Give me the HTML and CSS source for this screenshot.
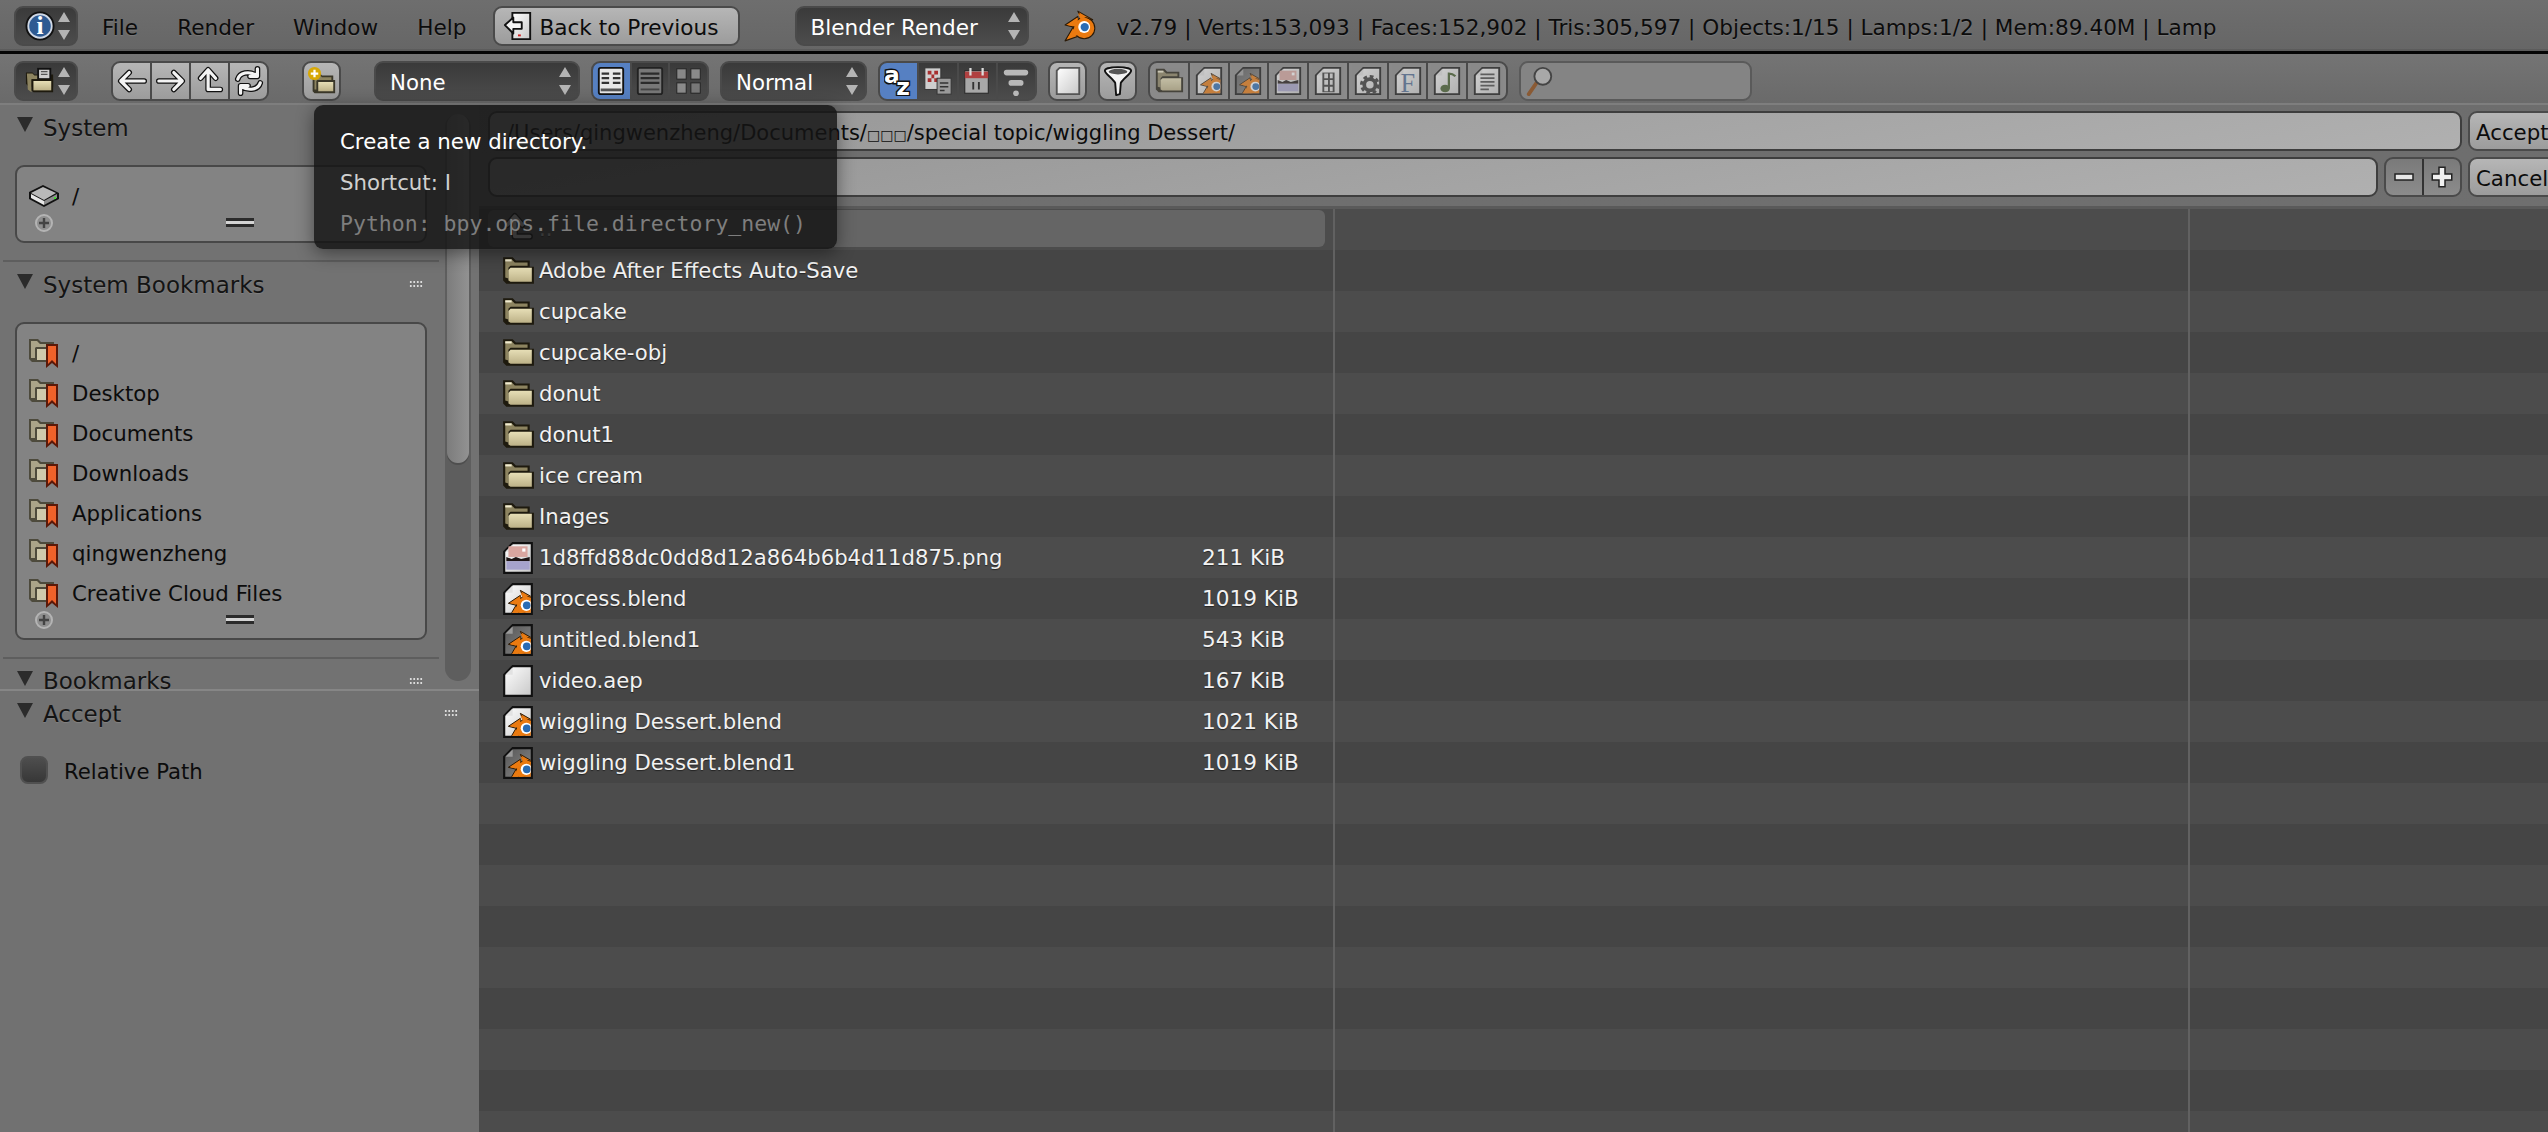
FILE: index.html
```html
<!DOCTYPE html>
<html lang="en">

<head>
  <meta charset="UTF-8" />
  <title>Blender File Browser</title>
  <link rel="stylesheet" href="styles.css">
</head>

<body>
  <!-- icon sprite -->
  <svg class="sprite" xmlns="http://www.w3.org/2000/svg">
    <defs>
      <linearGradient id="gFolder" x1="0" y1="0" x2="0" y2="1">
        <stop offset="0" stop-color="#e6deb6" />
        <stop offset="1" stop-color="#bdb288" />
      </linearGradient>
      <linearGradient id="gDoc" x1="0" y1="0" x2="1" y2="1">
        <stop offset="0" stop-color="#ffffff" />
        <stop offset="1" stop-color="#c8c8c8" />
      </linearGradient>
      <linearGradient id="gDocDark" x1="0" y1="0" x2="1" y2="1">
        <stop offset="0" stop-color="#555555" />
        <stop offset="1" stop-color="#8a8a8a" />
      </linearGradient>
      <clipPath id="cDoc">
        <rect x="4" y="3" width="24" height="26" />
      </clipPath>
      <symbol id="i-logo" viewBox="0 0 32 32">
        <g stroke="#2a1a08" stroke-width="1" stroke-linejoin="round">
          <path d="M13 2l14 8-9 3z" fill="#ea7a10" />
          <path d="M1 15l12-8v11z" fill="#ea7a10" />
          <path d="M1 30l10-17 7 11z" fill="#ea7a10" />
          <circle cx="19" cy="18" r="10" fill="#ea7a10" />
        </g>
        <path d="M13 4l12 7-8 2zM3 15l10-7v9zM3 28l9-14 5 9z" fill="#ea7a10" />
        <circle cx="19" cy="17" r="5.6" fill="#ffffff" />
        <circle cx="19.5" cy="17" r="3.9" fill="#2a6cb4" />
      </symbol>
      <symbol id="i-folder" viewBox="0 0 32 32">
        <path d="M2 3h9l3 3h13v6h4v16H5l-3-3z" fill="#1e1a0e" />
        <path d="M4 5h6l3 3h12v3H9l-2 2v10l-3-1z" fill="#8d8460" />
        <path d="M4 5h6v2H4z" fill="#f2ecd0" />
        <path d="M9 13h20v13H9l-2-1v-10z" fill="url(#gFolder)" />
      </symbol>
      <symbol id="i-folder-doc" viewBox="0 0 32 32">
        <path d="M1 7h7l2 2h20v13H4l-3-3z" fill="#1e1a0e" />
        <rect x="13" y="2" width="15" height="13" fill="#111111" />
        <rect x="15" y="4" width="11" height="9" fill="#cfcfcf" />
        <path d="M17 6h7M17 9h7" stroke="#555555" stroke-width="1.4" />
        <path d="M2 8h6l2 2h3v4H7v14l-4-3z" fill="#8d8460" />
        <path d="M7 14h23v14H9l-2-2z" fill="#1e1a0e" />
        <path d="M9 16h19v10H9z" fill="url(#gFolder)" />
      </symbol>
      <symbol id="i-folder-new" viewBox="0 0 32 32">
        <path d="M6 8h8l2 2h12v5h2v14H8l-2-2z" fill="#3a3729" />
        <path d="M8 10h6l2 2h10v3H11l-1 1v9H8z" fill="#8d8460" />
        <path d="M12 17h16v10H12z" fill="url(#gFolder)" />
        <circle cx="8" cy="8" r="7" fill="#d7a806" />
        <path d="M8 4v8M4 8h8" stroke="#ffffff" stroke-width="2.4" />
      </symbol>
      <symbol id="i-bookmark" viewBox="0 0 32 32">
        <path d="M1 2h9l3 3h13v5h2v15H4l-3-3z" fill="#4d4a3c" />
        <path d="M3 4h6l3 3h12v3H8l-1 1v10H3z" fill="#aaa489" />
        <path d="M9 12h17v11H9z" fill="#cfc9ac" />
        <path d="M18 7h12v24l-6-5-6 5z" fill="#5a1808" />
        <path d="M20 9h8v18l-4-4-4 4z" fill="#f0622a" />
      </symbol>
      <symbol id="i-disk" viewBox="0 0 32 24">
        <path d="M15 1l16 8v6l-15 8-15-8V8z" fill="#111111" />
        <path d="M15 3l13 6-12 7-13-7z" fill="#b9b9b9" />
        <path d="M3 10l13 7v4L3 14z" fill="#e8e8e8" />
        <path d="M16 17l13-7v4l-13 7z" fill="#8c8c8c" />
        <rect x="26" y="13" width="2" height="2" fill="#3fe02c" />
      </symbol>
      <symbol id="i-doc" viewBox="0 0 32 32">
        <path d="M11 2h18v28H3V10z" fill="url(#gDoc)" stroke="#111111" stroke-width="2" />
        <path d="M11 3v7H4z" fill="#e2e2e2" />
      </symbol>
      <symbol id="i-blend" viewBox="0 0 32 32">
        <use href="#i-doc" width="32" height="32" />
        <g clip-path="url(#cDoc)">
          <use href="#i-logo" x="6" y="6" width="30" height="30" />
        </g>
      </symbol>
      <symbol id="i-blend1" viewBox="0 0 32 32">
        <path d="M11 2h18v28H3V10z" fill="url(#gDocDark)" stroke="#111111" stroke-width="2" />
        <path d="M11 3v7H4z" fill="#9a9a9a" />
        <g clip-path="url(#cDoc)">
          <use href="#i-logo" x="6" y="6" width="30" height="30" />
        </g>
      </symbol>
      <symbol id="i-image" viewBox="0 0 32 32">
        <use href="#i-doc" width="32" height="32" />
        <rect x="7" y="5" width="18" height="10" fill="#d9a6a0" />
        <rect x="20" y="7" width="3" height="3" fill="#ffffff" />
        <path d="M5 15l5 2 4-2 5 2 8-2v4H5z" fill="#1c1414" />
        <rect x="5" y="19" width="22" height="8" fill="#a6a3cc" />
      </symbol>
      <symbol id="i-film" viewBox="0 0 32 32">
        <use href="#i-doc" width="32" height="32" />
        <rect x="10" y="7" width="13" height="21" fill="#333333" />
        <path d="M12 8h4v5h-4zM18 8h3v5h-3zM12 15h4v5h-4zM18 15h3v5h-3zM12 22h4v5h-4zM18 22h3v5h-3z" fill="#dddddd" />
      </symbol>
      <symbol id="i-gear" viewBox="0 0 32 32">
        <use href="#i-doc" width="32" height="32" />
        <circle cx="18" cy="20" r="6" fill="none" stroke="#333333" stroke-width="4" />
        <circle cx="18" cy="20" r="9" fill="none" stroke="#333333" stroke-width="3" stroke-dasharray="4 3" />
      </symbol>
      <symbol id="i-font" viewBox="0 0 32 32">
        <use href="#i-doc" width="32" height="32" />
        <text x="8" y="28" class="glyph-font">F</text>
      </symbol>
      <symbol id="i-music" viewBox="0 0 32 32">
        <use href="#i-doc" width="32" height="32" />
        <ellipse cx="14" cy="24" rx="5" ry="4" fill="#3f5a28" />
        <path d="M18 24V8c3 0 5 1 7 3" fill="none" stroke="#3f5a28" stroke-width="2.4" />
      </symbol>
      <symbol id="i-text" viewBox="0 0 32 32">
        <use href="#i-doc" width="32" height="32" />
        <path d="M9 9h15M9 13h15M9 17h15M9 21h15M9 25h9" stroke="#444444" stroke-width="1.8" />
      </symbol>
      <symbol id="i-updown" viewBox="0 0 14 32">
        <path d="M7 2l6 10H1zM7 30l6-10H1z" fill="#b4b4b4" />
      </symbol>
      <symbol id="i-back" viewBox="0 0 32 32">
        <path d="M10 2h19v28H10z" fill="url(#gDoc)" stroke="#111111" stroke-width="2" />
        <path d="M2 15l9-8v5h9v7h-9v5z" fill="#f4f4f4" stroke="#111111" stroke-width="2" stroke-linejoin="round" />
        <rect x="16" y="25" width="3" height="2" fill="#d02020" />
      </symbol>
      <symbol id="i-left" viewBox="0 0 32 32">
        <path d="M13 7l-9 9 9 9M5 16h24" fill="none" stroke="#111111" stroke-width="6" stroke-linecap="round" stroke-linejoin="round" />
        <path d="M13 7l-9 9 9 9M5 16h24" fill="none" stroke="#f4f4f4" stroke-width="3.4" stroke-linecap="round" stroke-linejoin="round" />
      </symbol>
      <symbol id="i-right" viewBox="0 0 32 32">
        <path d="M19 7l9 9-9 9M27 16H3" fill="none" stroke="#111111" stroke-width="6" stroke-linecap="round" stroke-linejoin="round" />
        <path d="M19 7l9 9-9 9M27 16H3" fill="none" stroke="#f4f4f4" stroke-width="3.4" stroke-linecap="round" stroke-linejoin="round" />
      </symbol>
      <symbol id="i-up" viewBox="0 0 32 32">
        <path d="M6 13l8-9 8 9M14 5v20h13" fill="none" stroke="#111111" stroke-width="6" stroke-linecap="round" stroke-linejoin="round" />
        <path d="M6 13l8-9 8 9M14 5v20h13" fill="none" stroke="#f4f4f4" stroke-width="3.4" stroke-linecap="round" stroke-linejoin="round" />
      </symbol>
      <symbol id="i-refresh" viewBox="0 0 32 32">
        <path d="M4 14c2-7 12-9 20-4M25 3v8h-8M28 18c-2 7-12 9-20 4M7 29v-8h8" fill="none" stroke="#111111" stroke-width="6" stroke-linecap="round" stroke-linejoin="round" />
        <path d="M4 14c2-7 12-9 20-4M25 3v8h-8M28 18c-2 7-12 9-20 4M7 29v-8h8" fill="none" stroke="#f4f4f4" stroke-width="3.4" stroke-linecap="round" stroke-linejoin="round" />
      </symbol>
      <symbol id="i-parent" viewBox="0 0 32 32">
        <path d="M6 12l7-8 7 8M13 5v18h14" fill="none" stroke="#111111" stroke-width="6" stroke-linecap="round" stroke-linejoin="round" />
        <path d="M6 12l7-8 7 8M13 5v18h14" fill="none" stroke="#e8e8e8" stroke-width="3.4" stroke-linecap="round" stroke-linejoin="round" />
      </symbol>
      <symbol id="i-info" viewBox="0 0 32 32">
        <circle cx="16" cy="16" r="14.5" fill="#cfd8e6" stroke="#111111" stroke-width="2" />
        <circle cx="16" cy="16" r="11.5" fill="#2e5a92" />
        <text x="16" y="25" class="glyph-info">i</text>
      </symbol>
      <symbol id="i-short" viewBox="0 0 32 32">
        <rect x="3" y="2" width="26" height="28" rx="2" fill="#e8e8e8" stroke="#111111" stroke-width="2" />
        <path d="M6 8h8M18 8h8M6 13h8M18 13h8M6 18h8M18 18h8" stroke="#333333" stroke-width="2.4" />
        <rect x="5" y="24" width="22" height="3" fill="#555555" />
      </symbol>
      <symbol id="i-long" viewBox="0 0 32 32">
        <rect x="3" y="2" width="26" height="28" rx="2" fill="#777777" stroke="#222222" stroke-width="2" />
        <path d="M6 8h20M6 13h20M6 18h20" stroke="#2a2a2a" stroke-width="2.4" />
        <rect x="6" y="24" width="20" height="2" fill="#444444" />
      </symbol>
      <symbol id="i-thumbs" viewBox="0 0 32 32">
        <rect x="3" y="3" width="10" height="11" fill="#888888" stroke="#222222" />
        <rect x="18" y="3" width="10" height="11" fill="#8a8a8a" stroke="#222222" />
        <rect x="3" y="18" width="10" height="11" fill="#8a8a8a" stroke="#222222" />
        <rect x="18" y="18" width="10" height="11" fill="#777777" stroke="#222222" />
      </symbol>
      <symbol id="i-az" viewBox="0 0 32 32">
        <text x="0" y="18" class="glyph-az">a</text>
        <text x="13" y="31" class="glyph-az">z</text>
      </symbol>
      <symbol id="i-ext" viewBox="0 0 32 32">
        <rect x="2" y="2" width="17" height="23" fill="#cfcfcf" stroke="#333333" />
        <path d="M5 5h4v4H5zM12 5h4v4h-4zM9 9h3v4H9zM5 13h4v4H5zM12 13h4v4h-4z" fill="#a83030" />
        <rect x="15" y="13" width="15" height="17" fill="#9a9a9a" stroke="#333333" />
        <path d="M18 18h9M18 22h9M18 26h5" stroke="#333333" stroke-width="1.6" />
      </symbol>
      <symbol id="i-cal" viewBox="0 0 32 32">
        <rect x="3" y="5" width="25" height="24" fill="#a8a8a8" stroke="#222222" />
        <rect x="3" y="6" width="25" height="7" fill="#b04040" />
        <path d="M9 2v8M22 2v8" stroke="#dddddd" stroke-width="2.4" />
        <path d="M12 17v8M18 17v8" stroke="#333333" stroke-width="2" />
      </symbol>
      <symbol id="i-size" viewBox="0 0 32 32">
        <rect x="3" y="4" width="26" height="6" rx="3" fill="#b8b8b8" />
        <rect x="8" y="15" width="16" height="6" rx="3" fill="#b8b8b8" />
        <rect x="13" y="26" width="6" height="6" rx="3" fill="#b8b8b8" />
      </symbol>
      <symbol id="i-hidden" viewBox="0 0 32 32">
        <path d="M7 2h21v28H4V5z" fill="url(#gDoc)" stroke="#555555" stroke-width="2" />
      </symbol>
      <symbol id="i-funnel" viewBox="0 0 32 32">
        <path d="M2 5c0-5 28-5 28 0 0 3-9 9-11 13l-1 12-4 1-1-13C11 14 2 8 2 5z" fill="#f2f2f2" stroke="#111111" stroke-width="2" stroke-linejoin="round" />
        <ellipse cx="16" cy="6" rx="10" ry="3" fill="#555555" />
      </symbol>
      <symbol id="i-search" viewBox="0 0 32 32">
        <path d="M4 30l9-13" stroke="#8a5a34" stroke-width="4" stroke-linecap="round" />
        <circle cx="19" cy="11" r="9" fill="#a8a8a8" stroke="#444444" stroke-width="2" />
      </symbol>
      <symbol id="i-add" viewBox="0 0 20 20">
        <circle cx="10" cy="10" r="8" fill="#8e8e8e" stroke="#b4b4b4" stroke-width="2" />
        <path d="M10 5v10M5 10h10" stroke="#444444" stroke-width="2.4" />
      </symbol>
      <symbol id="i-minus" viewBox="0 0 32 32">
        <rect x="4" y="12" width="24" height="8" fill="#e8e8e8" stroke="#222222" stroke-width="2" />
      </symbol>
      <symbol id="i-plus" viewBox="0 0 32 32">
        <path d="M12 3h8v9h9v8h-9v9h-8v-9H3v-8h9z" fill="#f0f0f0" stroke="#222222" stroke-width="2" />
      </symbol>
    </defs>
  </svg>

  <header class="topbar">
    <div class="w dark w-editor">
      <svg class="ic"><use href="#i-info" /></svg>
      <svg class="updown"><use href="#i-updown" /></svg>
    </div>
    <nav class="menus">
      <span>File</span>
      <span>Render</span>
      <span>Window</span>
      <span>Help</span>
    </nav>
    <div class="w light w-prev">
      <svg class="ic"><use href="#i-back" /></svg>
      <span class="label">Back to Previous</span>
    </div>
    <div class="w dark w-engine">
      <span class="label grow">Blender Render</span>
      <svg class="updown"><use href="#i-updown" /></svg>
    </div>
    <svg class="logo"><use href="#i-logo" /></svg>
    <span class="stats">v2.79 | Verts:153,093 | Faces:152,902 | Tris:305,597 | Objects:1/15 | Lamps:1/2 | Mem:89.40M | Lamp</span>
  </header>

  <div class="toolbar">
    <div class="w dark w-editor">
      <svg class="ic"><use href="#i-folder-doc" /></svg>
      <svg class="updown"><use href="#i-updown" /></svg>
    </div>
    <div class="w light seg w-nav gap-l">
      <span class="cell"><svg class="ic"><use href="#i-left" /></svg></span>
      <span class="cell"><svg class="ic"><use href="#i-right" /></svg></span>
      <span class="cell"><svg class="ic"><use href="#i-up" /></svg></span>
      <span class="cell"><svg class="ic"><use href="#i-refresh" /></svg></span>
    </div>
    <div class="w light seg w-one gap-l">
      <span class="cell"><svg class="ic"><use href="#i-folder-new" /></svg></span>
    </div>
    <div class="w dark w-none gap-l">
      <span class="label grow">None</span>
      <svg class="updown"><use href="#i-updown" /></svg>
    </div>
    <div class="w dark seg w-view gap-s">
      <span class="cell on"><svg class="ic"><use href="#i-short" /></svg></span>
      <span class="cell"><svg class="ic"><use href="#i-long" /></svg></span>
      <span class="cell"><svg class="ic"><use href="#i-thumbs" /></svg></span>
    </div>
    <div class="w dark w-normal gap-s">
      <span class="label grow">Normal</span>
      <svg class="updown"><use href="#i-updown" /></svg>
    </div>
    <div class="w dark seg w-sort gap-s">
      <span class="cell on"><svg class="ic"><use href="#i-az" /></svg></span>
      <span class="cell"><svg class="ic"><use href="#i-ext" /></svg></span>
      <span class="cell"><svg class="ic"><use href="#i-cal" /></svg></span>
      <span class="cell"><svg class="ic"><use href="#i-size" /></svg></span>
    </div>
    <div class="w light seg w-one gap-s">
      <span class="cell"><svg class="ic"><use href="#i-hidden" /></svg></span>
    </div>
    <div class="w light seg w-one gap-s">
      <span class="cell"><svg class="ic"><use href="#i-funnel" /></svg></span>
    </div>
    <div class="w seg dim w-types gap-s">
      <span class="cell"><svg class="ic"><use href="#i-folder" /></svg></span>
      <span class="cell"><svg class="ic"><use href="#i-blend" /></svg></span>
      <span class="cell"><svg class="ic"><use href="#i-blend1" /></svg></span>
      <span class="cell"><svg class="ic"><use href="#i-image" /></svg></span>
      <span class="cell"><svg class="ic"><use href="#i-film" /></svg></span>
      <span class="cell"><svg class="ic"><use href="#i-gear" /></svg></span>
      <span class="cell"><svg class="ic"><use href="#i-font" /></svg></span>
      <span class="cell"><svg class="ic"><use href="#i-music" /></svg></span>
      <span class="cell"><svg class="ic"><use href="#i-text" /></svg></span>
    </div>
    <div class="w search gap-s">
      <svg class="ic"><use href="#i-search" /></svg>
    </div>
  </div>

  <div class="browser">
    <aside class="side">
      <div class="side-top">
        <div class="panels">
          <section class="panel">
            <div class="panel-head">
              <span class="tri"></span>
              <span class="label">System</span>
            </div>
            <div class="box">
              <div class="box-row"><svg class="ic-disk"><use href="#i-disk" /></svg><span>/</span></div>
              <div class="box-foot">
                <svg class="ic-add"><use href="#i-add" /></svg>
                <span class="resize"></span>
              </div>
            </div>
          </section>
          <section class="panel">
            <div class="panel-head">
              <span class="tri"></span>
              <span class="label">System Bookmarks</span>
              <span class="grip"></span>
            </div>
            <div class="box">
              <div class="box-row"><svg class="ic-mark"><use href="#i-bookmark" /></svg><span>/</span></div>
              <div class="box-row"><svg class="ic-mark"><use href="#i-bookmark" /></svg><span>Desktop</span></div>
              <div class="box-row"><svg class="ic-mark"><use href="#i-bookmark" /></svg><span>Documents</span></div>
              <div class="box-row"><svg class="ic-mark"><use href="#i-bookmark" /></svg><span>Downloads</span></div>
              <div class="box-row"><svg class="ic-mark"><use href="#i-bookmark" /></svg><span>Applications</span></div>
              <div class="box-row"><svg class="ic-mark"><use href="#i-bookmark" /></svg><span>qingwenzheng</span></div>
              <div class="box-row"><svg class="ic-mark"><use href="#i-bookmark" /></svg><span>Creative Cloud Files</span></div>
              <div class="box-foot">
                <svg class="ic-add"><use href="#i-add" /></svg>
                <span class="resize"></span>
              </div>
            </div>
          </section>
          <section class="panel">
            <div class="panel-head">
              <span class="tri"></span>
              <span>Bookmarks</span>
              <span class="grip"></span>
            </div>
          </section>
        </div>
        <div class="scroll-track">
          <div class="scroll-thumb"></div>
        </div>
      </div>
      <section class="accept">
        <div class="panel-head">
          <span class="tri"></span>
          <span class="label">Accept</span>
          <span class="grip"></span>
        </div>
        <label class="check-row">
          <span class="check"></span>
          <span class="label">Relative Path</span>
        </label>
      </section>
    </aside>

    <main class="files">
      <div class="path-rows">
        <div class="path-row">
          <div class="w field grow"><span class="label">/Users/qingwenzheng/Documents/<span class="tofu">□□□</span>/special topic/wiggling Dessert/</span></div>
          <div class="w light w-act"><span class="label">Accept</span></div>
        </div>
        <div class="path-row">
          <div class="w field grow"></div>
          <div class="w light seg w-inc">
            <span class="cell"><svg class="ic-sm"><use href="#i-minus" /></svg></span>
            <span class="cell"><svg class="ic-sm"><use href="#i-plus" /></svg></span>
          </div>
          <div class="w light w-act"><span class="label">Cancel</span></div>
        </div>
      </div>
      <div class="columns">
        <div class="col col-files">
          <div class="row parent">
            <svg class="ic-file"><use href="#i-parent" /></svg>
            <span class="name">..</span>
          </div>
          <div class="row">
            <svg class="ic-file"><use href="#i-folder" /></svg>
            <span class="name">Adobe After Effects Auto-Save</span>
          </div>
          <div class="row">
            <svg class="ic-file"><use href="#i-folder" /></svg>
            <span class="name">cupcake</span>
          </div>
          <div class="row">
            <svg class="ic-file"><use href="#i-folder" /></svg>
            <span class="name">cupcake-obj</span>
          </div>
          <div class="row">
            <svg class="ic-file"><use href="#i-folder" /></svg>
            <span class="name">donut</span>
          </div>
          <div class="row">
            <svg class="ic-file"><use href="#i-folder" /></svg>
            <span class="name">donut1</span>
          </div>
          <div class="row">
            <svg class="ic-file"><use href="#i-folder" /></svg>
            <span class="name">ice cream</span>
          </div>
          <div class="row">
            <svg class="ic-file"><use href="#i-folder" /></svg>
            <span class="name">Inages</span>
          </div>
          <div class="row">
            <svg class="ic-file"><use href="#i-image" /></svg>
            <span class="name">1d8ffd88dc0dd8d12a864b6b4d11d875.png</span>
            <span class="size">211 KiB</span>
          </div>
          <div class="row">
            <svg class="ic-file"><use href="#i-blend" /></svg>
            <span class="name">process.blend</span>
            <span class="size">1019 KiB</span>
          </div>
          <div class="row">
            <svg class="ic-file"><use href="#i-blend1" /></svg>
            <span class="name">untitled.blend1</span>
            <span class="size">543 KiB</span>
          </div>
          <div class="row">
            <svg class="ic-file"><use href="#i-doc" /></svg>
            <span class="name">video.aep</span>
            <span class="size">167 KiB</span>
          </div>
          <div class="row">
            <svg class="ic-file"><use href="#i-blend" /></svg>
            <span class="name">wiggling Dessert.blend</span>
            <span class="size">1021 KiB</span>
          </div>
          <div class="row">
            <svg class="ic-file"><use href="#i-blend1" /></svg>
            <span class="name">wiggling Dessert.blend1</span>
            <span class="size">1019 KiB</span>
          </div>
        </div>
        <div class="col col-mid"></div>
        <div class="col"></div>
      </div>
    </main>
  </div>

  <!-- tooltip over the new directory button -->
  <div class="tooltip">
    <div class="tip-line">Create a new directory.</div>
    <div class="tip-line tip-key">Shortcut: I</div>
    <div class="tip-line tip-py">Python: bpy.ops.file.directory_new()</div>
  </div>
</body>

</html>
```

FILE: styles.css
```css
html,
body {
  margin: 0;
  height: 1132px;
  overflow: hidden;
}

body {
  position: relative;
  background: #727272;
  color: #0c0c0c;
  font-family: "DejaVu Sans", sans-serif;
  font-size: 21.3px;
}

.sprite {
  display: block;
  width: 0;
  height: 0;
}

.glyph-font {
  font-family: "Liberation Serif", serif;
  font-size: 28px;
  fill: #4d6a94;
}

.glyph-info {
  font-family: "Liberation Serif", serif;
  font-size: 27px;
  font-weight: bold;
  fill: #ffffff;
  text-anchor: middle;
}

.glyph-az {
  font-family: "DejaVu Sans", sans-serif;
  font-size: 25px;
  font-weight: bold;
  fill: #ffffff;
  stroke: #111111;
  stroke-width: 3px;
  paint-order: stroke;
}

/* bars */
.topbar {
  display: flex;
  align-items: center;
  box-sizing: border-box;
  height: 54px;
  padding: 1px 0 0 14px;
  background: linear-gradient(#6e6e6e, #666666);
  border-bottom: 3px solid #050505;
  box-shadow: inset 0 -2px 0 #5c5c5c;
  font-size: 21.6px;
}

.toolbar {
  display: flex;
  align-items: center;
  box-sizing: border-box;
  height: 51px;
  padding: 5px 0 0 14px;
  background: linear-gradient(#747474, #6a6a6a);
  border-bottom: 2px solid #7e7e7e;
}

.menus {
  display: flex;
  gap: 39px;
  margin: 0 27px 0 24px;
  padding-top: 3px;
  text-shadow: 0 1px 1px rgba(255, 255, 255, 0.12);
}

.stats {
  margin-left: 18px;
  padding-top: 3px;
  text-shadow: 0 1px 1px rgba(255, 255, 255, 0.12);
  white-space: nowrap;
}

.logo {
  width: 34px;
  height: 34px;
  margin-left: 35px;
}

/* widgets */
.w {
  display: flex;
  flex: none;
  align-items: center;
  box-sizing: border-box;
  height: 40px;
  border: 2px solid #4a4a4a;
  border-radius: 9px;
  white-space: nowrap;
}

.label {
  padding-top: 3px;
}

.tofu {
  font-size: 14px;
}

.light {
  background: linear-gradient(#b6b6b6, #9c9c9c);
  color: #0c0c0c;
}

.dark {
  background: linear-gradient(#3a3a3a, #4c4c4c);
  color: #ffffff;
}

.dim {
  background: #8a8a8a;
}

.field {
  background: linear-gradient(170deg, #969696, #b0b0b0);
  border-color: #3e3e3e;
  padding-left: 17px;
  font-size: 21px;
}

.grow {
  flex: 1;
}

.search {
  width: 233px;
  padding-left: 4px;
  background: #848484;
  border-color: #5a5a5a;
}

.gap-s {
  margin-left: 11px;
}

.gap-l {
  margin-left: 33px;
}

.w-editor {
  width: 64px;
  padding-left: 9px;
}

.w-prev {
  width: 247px;
  padding-left: 8px;
  gap: 6px;
}

.w-engine {
  width: 234px;
  margin-left: 55px;
  padding: 0 6px 0 13px;
}

.w-nav {
  width: 158px;
}

.w-one {
  width: 39px;
}

.w-none {
  width: 206px;
  padding: 0 6px 0 14px;
}

.w-view {
  width: 118px;
}

.w-normal {
  width: 147px;
  padding: 0 6px 0 14px;
}

.w-sort {
  width: 159px;
}

.w-types {
  width: 360px;
}

.seg {
  overflow: hidden;
}

.cell {
  display: flex;
  flex: 1;
  align-items: center;
  justify-content: center;
  height: 100%;
  border-left: 2px solid #4a4a4a;
}

.cell:first-child {
  border-left: 0;
}

.on {
  background: #5680c2;
}

.ic {
  flex: none;
  width: 30px;
  height: 30px;
}

.dim .ic {
  opacity: 0.62;
}

.updown {
  flex: none;
  width: 14px;
  height: 32px;
  margin-left: 2px;
}

/* left side */
.browser {
  display: flex;
  height: 1027px;
}

.side {
  display: flex;
  flex: none;
  flex-direction: column;
  width: 479px;
  background: #727272;
}

.side-top {
  display: flex;
  flex: none;
  height: 584px;
  overflow: hidden;
}

.panels {
  flex: none;
  width: 436px;
  margin: 0 6px 0 3px;
}

.panel {
  padding: 0 12px 17px;
  border-bottom: 2px solid #5e5e5e;
}

.panel-head {
  display: flex;
  align-items: center;
  height: 44px;
  font-size: 23px;
  color: #141414;
  text-shadow: 0 1px 1px rgba(255, 255, 255, 0.12);
}

.panel-head .label {
  padding-top: 1px;
}

.tri {
  flex: none;
  width: 0;
  height: 0;
  margin: 0 10px 6px 2px;
  border-top: 15px solid #2b2b2b;
  border-left: 8px solid transparent;
  border-right: 8px solid transparent;
}

.grip {
  flex: none;
  width: 14px;
  height: 8px;
  margin-left: auto;
  margin-right: 4px;
  background-image: radial-gradient(circle, #dcdcdc 1px, transparent 1.2px);
  background-size: 3.5px 4px;
}

.box {
  box-sizing: border-box;
  margin-top: 16px;
  padding-top: 9px;
  background: #838383;
  border: 2px solid #484848;
  border-radius: 9px;
}

.box-row {
  display: flex;
  align-items: center;
  height: 40px;
  padding-left: 11px;
  gap: 12px;
}

.ic-disk {
  flex: none;
  width: 32px;
  height: 24px;
}

.ic-mark {
  flex: none;
  width: 32px;
  height: 32px;
}

.box-foot {
  display: flex;
  align-items: flex-start;
  height: 25px;
  padding-left: 17px;
}

.ic-add {
  flex: none;
  width: 20px;
  height: 20px;
  margin-top: -3px;
}

.resize {
  flex: none;
  width: 28px;
  height: 3px;
  margin: 2px 0 0 172px;
  border-top: 3px solid #2b2b2b;
  border-bottom: 3px solid #2b2b2b;
  background: #d4d4d4;
}

.scroll-track {
  flex: none;
  width: 26px;
  height: 567px;
  margin-top: 9px;
  background: #5e5e5e;
  border-radius: 13px;
}

.scroll-thumb {
  height: 349px;
  margin: 0 2px;
  background: linear-gradient(90deg, #7c7c7c, #929292);
  border-radius: 11px;
  box-shadow: 0 2px 0 #4e4e4e;
}

.accept {
  flex: 1;
  padding: 0 0 0 15px;
  border-top: 2px solid #868686;
  background: #717171;
}

.accept .grip {
  margin-right: 21px;
}

.check-row {
  display: flex;
  align-items: center;
  gap: 16px;
  margin: 21px 0 0 5px;
  font-size: 21.2px;
}

.check {
  flex: none;
  width: 28px;
  height: 28px;
  box-sizing: border-box;
  background: linear-gradient(#4e4e4e, #373737);
  border: 2px solid #505050;
  border-radius: 8px;
}

/* file area */
.files {
  flex: 1;
  min-width: 0;
  overflow: hidden;
}

.path-rows {
  box-sizing: border-box;
  height: 104px;
  padding: 6px 0 0 9px;
  background: linear-gradient(#6d6d6d, #6f6f6f);
  border-bottom: 3px solid #5a5a5a;
}

.path-row {
  display: flex;
  gap: 6px;
  margin: 0 -20px 6px 0;
}

.path-row .field {
  min-width: 0;
}

.w-act {
  width: 100px;
  padding-left: 6px;
}

.w-inc {
  width: 78px;
  background: linear-gradient(#7a7a7a, #8c8c8c);
}

.w-inc .cell {
  border-left-color: #333333;
}

.ic-sm {
  width: 24px;
  height: 26px;
}

.columns {
  display: flex;
  height: 923px;
  background: repeating-linear-gradient(#4c4c4c 0, #4c4c4c 41px, #454545 41px, #454545 82px);
  color: #f2f2f2;
  font-size: 21.2px;
  text-shadow: 0 1px 1px rgba(0, 0, 0, 0.5);
}

.col {
  flex: 1;
}

.col-files {
  flex: none;
  box-sizing: border-box;
  width: 856px;
  border-right: 2px solid #616161;
}

.col-mid {
  flex: none;
  box-sizing: border-box;
  width: 855px;
  border-right: 2px solid #616161;
}

.row {
  display: flex;
  align-items: center;
  height: 41px;
  padding-left: 22px;
  gap: 4px;
}

.parent {
  height: 37px;
  margin: 1px 8px 3px 9px;
  padding-left: 13px;
  background: #656565;
  border-radius: 6px;
}

.ic-file {
  flex: none;
  width: 34px;
  height: 34px;
}

.name {
  flex: none;
  width: 659px;
}

.size {
  font-size: 21.6px;
}

/* tooltip */
.tooltip {
  position: absolute;
  left: 314px;
  top: 105px;
  box-sizing: border-box;
  width: 523px;
  height: 144px;
  padding: 16px 0 0 26px;
  background: rgba(20, 20, 20, 0.84);
  border-radius: 9px;
  box-shadow: 0 4px 18px rgba(0, 0, 0, 0.45);
  color: #ffffff;
}

.tip-line {
  height: 41px;
  line-height: 41px;
}

.tip-key {
  color: #d0d0d0;
}

.tip-py {
  color: #7e7e7e;
  font-family: "DejaVu Sans Mono", monospace;
  font-size: 21.5px;
}
```
